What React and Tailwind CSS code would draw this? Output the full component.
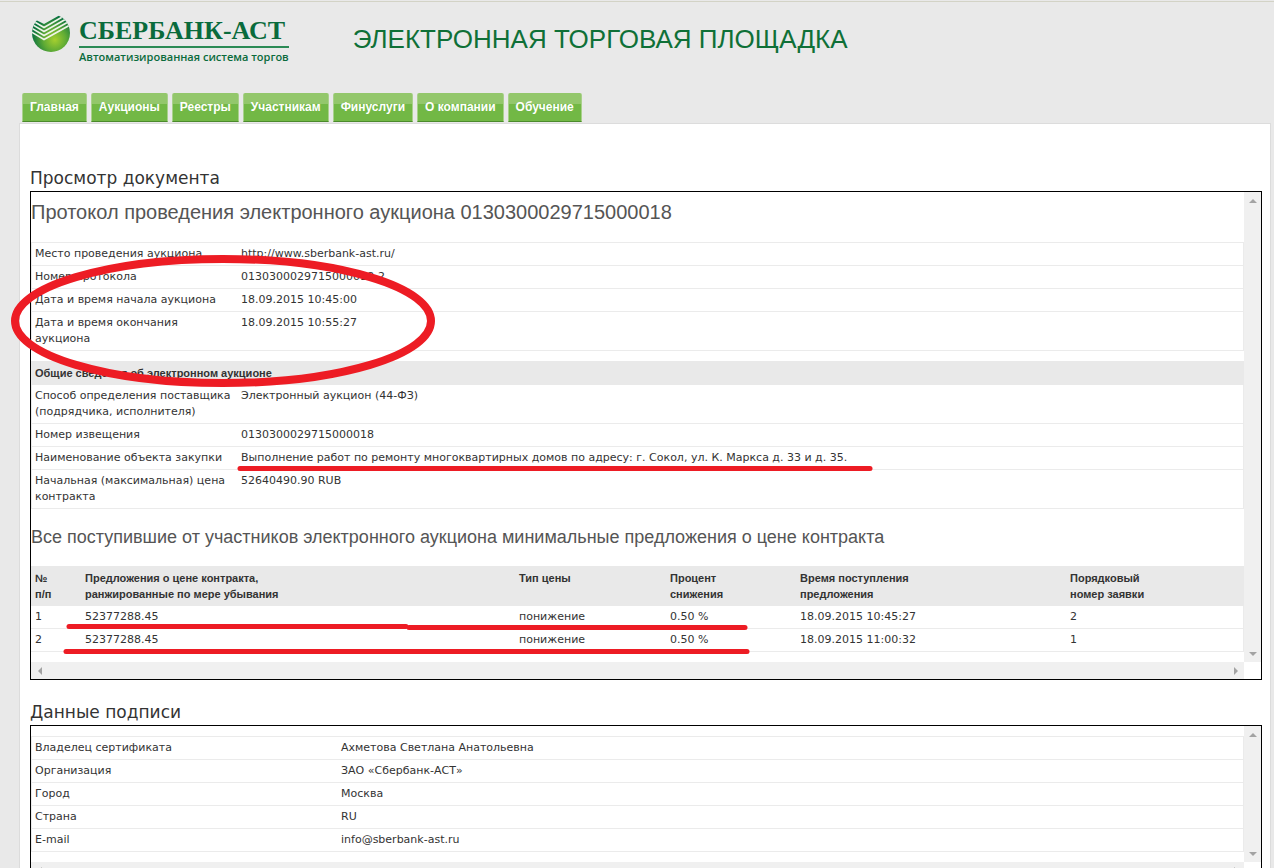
import clsx from 'clsx';

const NAV = ['Главная', 'Аукционы', 'Реестры', 'Участникам', 'Финуслуги', 'О компании', 'Обучение'];

const PROTOCOL = [
  ['Место проведения аукциона', 'http://www.sberbank-ast.ru/'],
  ['Номер протокола', '0130300029715000018-2'],
  ['Дата и время начала аукциона', '18.09.2015 10:45:00'],
  ['Дата и время окончания аукциона', '18.09.2015 10:55:27'],
];

const GENERAL = [
  ['Способ определения поставщика (подрядчика, исполнителя)', 'Электронный аукцион (44-ФЗ)'],
  ['Номер извещения', '0130300029715000018'],
  ['Наименование объекта закупки', 'Выполнение работ по ремонту многоквартирных домов по адресу: г. Сокол, ул. К. Маркса д. 33 и д. 35.'],
  ['Начальная (максимальная) цена контракта', '52640490.90 RUB'],
];

const OFFER_COLUMNS = [
  { lines: ['№', 'п/п'], width: 'w-[50px]' },
  { lines: ['Предложения о цене контракта,', 'ранжированные по мере убывания'], width: 'w-[434px]' },
  { lines: ['Тип цены'], width: 'w-[151px]' },
  { lines: ['Процент', 'снижения'], width: 'w-[130px]' },
  { lines: ['Время поступления', 'предложения'], width: 'w-[270px]' },
  { lines: ['Порядковый', 'номер заявки'], width: '' },
];

const OFFERS = [
  ['1', '52377288.45', 'понижение', '0.50 %', '18.09.2015 10:45:27', '2'],
  ['2', '52377288.45', 'понижение', '0.50 %', '18.09.2015 11:00:32', '1'],
];

const SIGNATURE = [
  ['Владелец сертификата', 'Ахметова Светлана Анатольевна'],
  ['Организация', 'ЗАО «Сбербанк-АСТ»'],
  ['Город', 'Москва'],
  ['Страна', 'RU'],
  ['E-mail', 'info@sberbank-ast.ru'],
];

const ARROWS = {
  up: 'M0 4 L4 0 L8 4 Z',
  down: 'M0 0 L8 0 L4 4 Z',
  left: 'M4 0 L4 8 L0 4 Z',
  right: 'M0 0 L4 4 L0 8 Z',
};

function ArrowButton({ dir, label }) {
  const vertical = dir === 'up' || dir === 'down';
  return (
    <button type="button" aria-label={label} className="flex size-[17px] items-center justify-center">
      <svg width={vertical ? 8 : 4} height={vertical ? 4 : 8} fill="#a3a3a3">
        <path d={ARROWS[dir]} />
      </svg>
    </button>
  );
}

function ScrollFrame({ children }) {
  return (
    <div className="border border-black bg-white">
      <div className="flex">
        <div className="min-w-0 flex-1 pb-[10px]">{children}</div>
        <div className="flex w-[17px] flex-col justify-between bg-[#f0f0f0]">
          <ArrowButton dir="up" label="Вверх" />
          <ArrowButton dir="down" label="Вниз" />
        </div>
      </div>
      <div className="mr-[17px] flex justify-between bg-[#f0f0f0]">
        <ArrowButton dir="left" label="Влево" />
        <ArrowButton dir="right" label="Вправо" />
      </div>
    </div>
  );
}

function InfoTable({ rows, labelWidth, topBorder }) {
  return (
    <table className={clsx('w-full table-fixed border-separate border-spacing-0 border-x border-[#ebebeb]', topBorder && 'border-t')}>
      <tbody>
        {rows.map(([label, value]) => (
          <tr key={label}>
            <th scope="row" className={clsx('border-b border-[#ebebeb] py-[3px] pr-1 pl-[3px] text-left align-top font-normal', labelWidth)}>
              {label}
            </th>
            <td className="border-b border-[#ebebeb] px-1 py-[3px] align-top">{value}</td>
          </tr>
        ))}
      </tbody>
    </table>
  );
}

function Logo() {
  return (
    <a href="#" className="flex gap-2 text-[#0a6b3c]">
      <svg width="40" height="40" viewBox="0 0 40 40">
        <defs>
          <radialGradient id="ball" cx="0.6" cy="0.68" r="0.6">
            <stop offset="0" stopColor="#a5cf2f" />
            <stop offset="0.5" stopColor="#5fab35" />
            <stop offset="1" stopColor="#0b7240" />
          </radialGradient>
          <clipPath id="ball-clip">
            <circle cx="20" cy="18" r="19" />
          </clipPath>
        </defs>
        <circle cx="20" cy="18" r="19" fill="url(#ball)" />
        <path d="M-1 -2 L-1 7 L5 5 L13 9 L29 0 L29 -2 Z" fill="#e9e9e9" />
        <g clipPath="url(#ball-clip)" fill="none" stroke="#eef3e8" strokeWidth="1.7">
          <path d="M2 6 L13 12.4 L33 1" />
          <path d="M0 8.8 L13 16.4 L36 3.5" />
          <path d="M0 12.8 L13 20.4 L38 6.5" />
          <path d="M0 16.8 L13 24.4 L40 9.5" />
        </g>
      </svg>
      <span className="flex flex-col">
        <span className="border-b-2 border-[#2b8a55] font-['Liberation_Serif',serif] text-[26px] leading-[31px] font-bold">СБЕРБАНК-АСТ</span>
        <span className="font-['Open_Sans',sans-serif] text-[11px] leading-[18px] font-semibold">Автоматизированная система торгов</span>
      </span>
    </a>
  );
}

// red marker strokes over the protocol
function Markers() {
  return (
    <svg className="pointer-events-none absolute top-0 left-0 h-full w-full overflow-visible" fill="none" stroke="#ed1c24">
      <ellipse cx="193" cy="130" rx="208" ry="62" strokeWidth="8" />
      <g strokeWidth="5" strokeLinecap="round">
        <path d="M210 277.5 H840" />
        <path d="M39 435.5 H376" />
        <path d="M379 436.5 H715" />
        <path d="M36 460.5 H717" />
      </g>
    </svg>
  );
}

export default function App() {
  return (
    <div className="flex min-h-screen flex-col bg-[#e9e9e9] pt-px font-['DejaVu_Sans',sans-serif] text-[11px] leading-4 text-[#333333]">
      <header className="border-t border-[#d3d3c6]">
        <div className="flex h-[91px] items-start pt-[13px] pl-[31px]">
          <Logo />
          <h1 className="ml-16 pt-2 font-['Liberation_Sans',sans-serif] text-[26px] leading-[32px] text-[#0f7037]">
            ЭЛЕКТРОННАЯ ТОРГОВАЯ ПЛОЩАДКА
          </h1>
        </div>
        <nav className="flex gap-1 pb-px pl-[22px]">
          {NAV.map((item) => (
            <a
              key={item}
              href="#"
              className="rounded-t-xs border-x border-b border-x-[#a9d18b] border-b-[#4b8a2c] bg-linear-to-b from-[#93c76b] from-40% to-[#72b845] to-40% px-[7px] pt-[6px] pb-[6px] font-['Liberation_Sans',sans-serif] text-[12px] leading-4 font-bold text-white"
            >
              {item}
            </a>
          ))}
        </nav>
      </header>

      <main className="mr-[3px] ml-[19px] flex-1 border border-b-0 border-[#dcdcdc] bg-white pt-[42px] pr-2 pl-[10px]">
        <section>
          <h2 className="text-[17px] leading-[25px]">Просмотр документа</h2>
          <div className="relative">
            <ScrollFrame>
              <h3 className="pt-2 pb-[18px] font-['Liberation_Sans',sans-serif] text-[20px] leading-6 text-[#555555]">
                Протокол проведения электронного аукциона 0130300029715000018
              </h3>
              <InfoTable rows={PROTOCOL} labelWidth="w-[205px]" topBorder />
              <h4 className="mt-[10px] bg-[#e9e9e9] px-1 py-1 font-['Liberation_Sans',sans-serif] font-bold">
                Общие сведения об электронном аукционе
              </h4>
              <InfoTable rows={GENERAL} labelWidth="w-[205px]" />
              <h3 className="pt-4 pb-[17px] font-['Liberation_Sans',sans-serif] text-[18px] leading-6 text-[#555555]">
                Все поступившие от участников электронного аукциона минимальные предложения о цене контракта
              </h3>
              <table className="w-full table-fixed border-separate border-spacing-0">
                <thead>
                  <tr className="bg-[#e9e9e9] font-['Liberation_Sans',sans-serif]">
                    {OFFER_COLUMNS.map(({ lines, width }) => (
                      <th key={lines[0]} scope="col" className={clsx('px-1 py-1 text-left align-top font-bold', width)}>
                        {lines.map((line) => (
                          <span key={line} className="block">{line}</span>
                        ))}
                      </th>
                    ))}
                  </tr>
                </thead>
                <tbody>
                  {OFFERS.map((row) => (
                    <tr key={row[0]}>
                      {row.map((cell, i) => (
                        <td key={i} className="border-b border-[#ebebeb] px-1 py-[3px] last:border-r">{cell}</td>
                      ))}
                    </tr>
                  ))}
                </tbody>
              </table>
            </ScrollFrame>
            <Markers />
          </div>
        </section>

        <section className="pt-5">
          <h2 className="text-[17px] leading-[25px]">Данные подписи</h2>
          <ScrollFrame>
            <div className="pt-[10px]">
              <InfoTable rows={SIGNATURE} labelWidth="w-[305px]" topBorder />
            </div>
          </ScrollFrame>
        </section>
      </main>
    </div>
  );
}
